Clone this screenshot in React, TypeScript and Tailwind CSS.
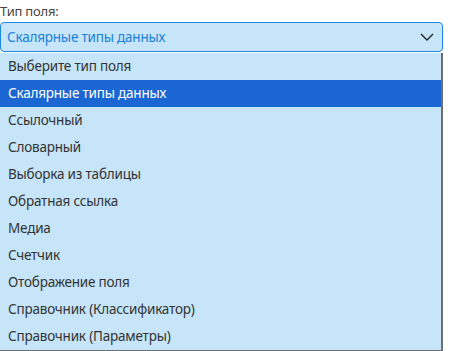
import React from "react";

const items = [
  "Выберите тип поля",
  "Скалярные типы данных",
  "Ссылочный",
  "Словарный",
  "Выборка из таблицы",
  "Обратная ссылка",
  "Медиа",
  "Счетчик",
  "Отображение поля",
  "Справочник (Классификатор)",
  "Справочник (Параметры)",
];

export default function App() {
  return (
    <div className="w-[452px] h-[351px] bg-white overflow-hidden" style={{ fontFamily: '"Noto Sans", "Open Sans", sans-serif' }}>
      <div className="w-[443px]">
        <div className="h-[22px] pt-[2px] text-[13px] leading-[18px] text-[#444] tracking-[-0.2px]">Тип поля:</div>
        <div className="h-[30px] flex items-center justify-between rounded-[4px] border border-[#1e88e5] bg-[#c6e5f9] pl-[6px] pr-[8px] text-[13.5px] tracking-[-0.2px] text-[#1a80d8]">
          <span>Скалярные типы данных</span>
          <svg width="14" height="8" viewBox="0 0 14 8" fill="none" stroke="#222" strokeWidth="1.4">
            <path d="M1 1l6 6 6-6" />
          </svg>
        </div>
        <div className="mt-[1px] bg-[#c6e5f9] border-r-2 border-b-2 border-[#6f6f6f]">
          {items.map((it, i) => (
            <div
              key={i}
              className={
                i === 1
                  ? "h-[27px] flex items-center pl-[8px] text-[13.5px] tracking-[-0.2px] bg-[#1a66d2] text-white"
                  : "h-[27px] flex items-center pl-[8px] text-[13.5px] tracking-[-0.2px] text-[#333]"
              }
            >
              {it}
            </div>
          ))}
        </div>
      </div>
    </div>
  );
}
